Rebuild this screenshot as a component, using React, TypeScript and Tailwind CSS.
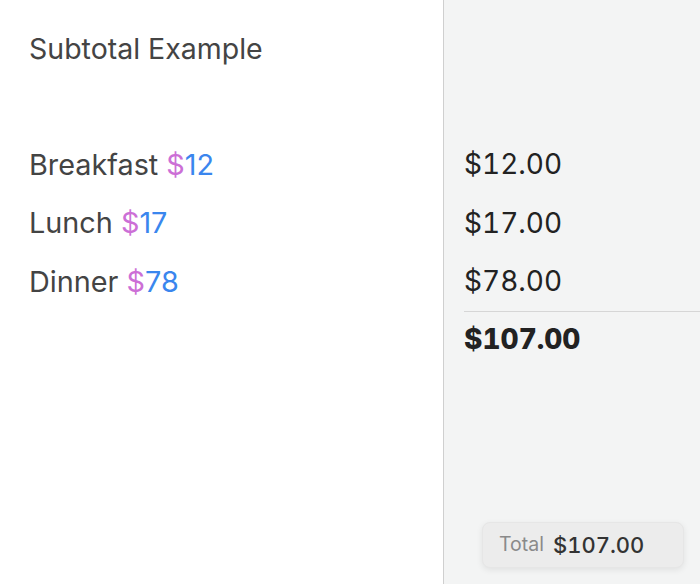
const items = [
  { name: "Breakfast", price: 12 },
  { name: "Lunch", price: 17 },
  { name: "Dinner", price: 78 },
];

export default function App() {
  const total = items.reduce((sum, i) => sum + i.price, 0);

  return (
    <div className="flex h-[584px] w-[700px] overflow-hidden bg-white font-['Inter',sans-serif]">
      <div className="w-[444px] shrink-0 border-r border-[#cfcfcf] pl-[29px] pt-[30px]">
        <h1 className="text-[28.5px] leading-[38px] text-[#444]">Subtotal Example</h1>
        <div className="mt-[67px] flex flex-col">
          {items.map((item) => (
            <div key={item.name} className="flex h-[58.5px] items-center text-[28.8px] text-[#444]">
              {item.name}&nbsp;
              <span className="text-[#cc6fd6]">$</span>
              <span className="text-[#3a86ee]">{item.price}</span>
            </div>
          ))}
        </div>
      </div>

      <div className="flex flex-1 flex-col bg-[#f3f4f4]">
        <div className="mt-[135px] flex flex-col tabular-nums">
          {items.map((item) => (
            <div key={item.name} className="flex h-[58.5px] items-center pl-[20px] text-[28px] text-[#222]">
              ${item.price.toFixed(2)}
            </div>
          ))}
          <div className="ml-[20px] h-px bg-[#d6d6d6]" />
          <div className="flex h-[54px] items-center pl-[20px] text-[28px] font-extrabold text-[#222]">
            ${total.toFixed(2)}
          </div>
        </div>

        <div className="mb-[16px] mr-[16px] mt-auto flex h-[46px] w-[202px] items-center gap-[9px] self-end rounded-lg border border-[#e6e6e6] bg-[#ececec] pl-[16px] shadow-[0_2px_6px_rgba(0,0,0,0.08)]">
          <span className="text-[19.5px] text-[#8a8a8a]">Total</span>
          <span className="text-[22px] font-medium tabular-nums text-[#333]">${total.toFixed(2)}</span>
        </div>
      </div>
    </div>
  );
}
